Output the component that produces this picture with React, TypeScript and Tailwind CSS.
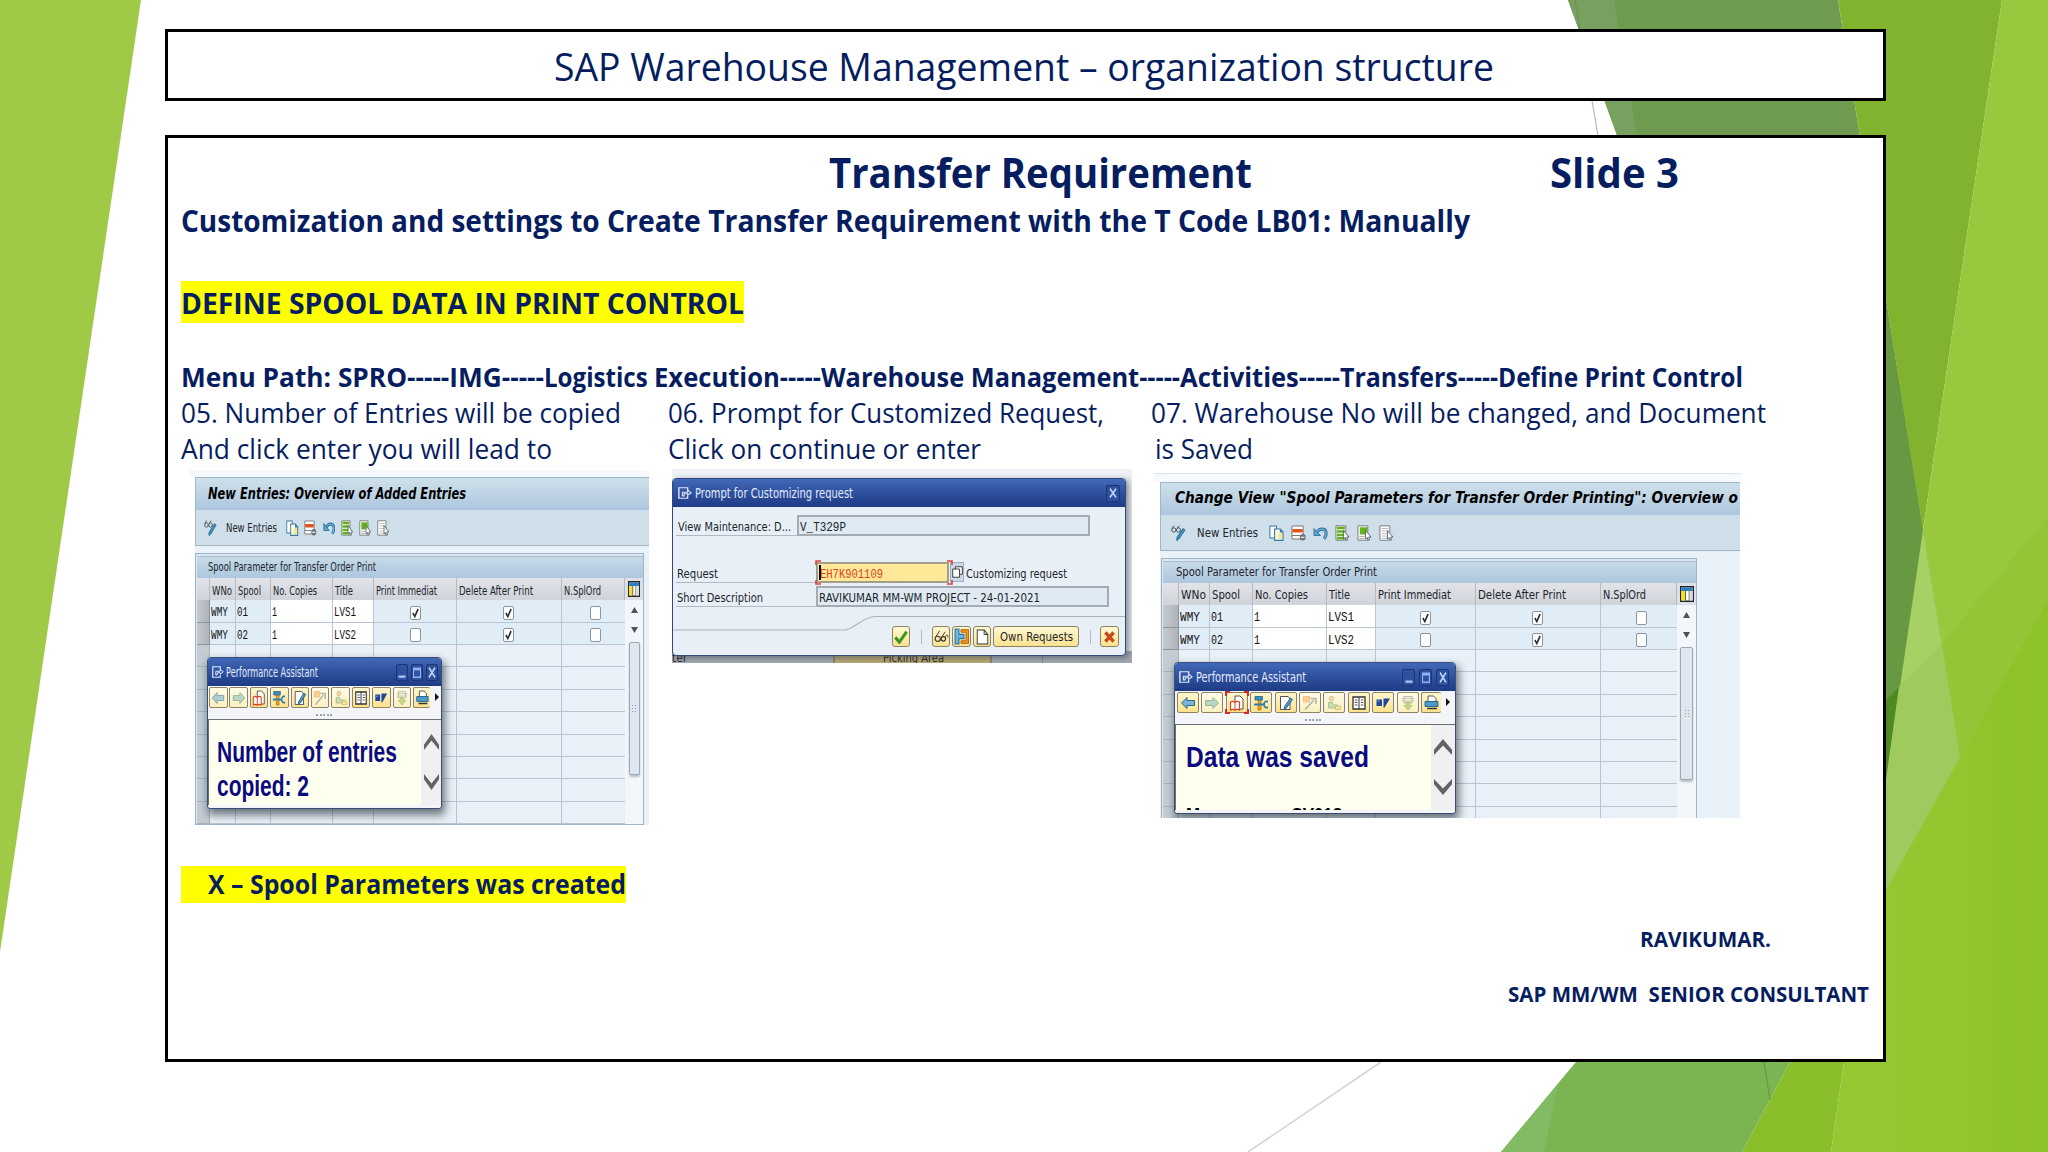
import React, { useLayoutEffect, useRef, useState } from 'react';

interface FitProps {
  className: string;
  children: React.ReactNode;
}

// Single line of text squeezed or stretched to the width of its box
const Fit: React.FC<FitProps> = ({ className, children }) => {
  const box = useRef<HTMLSpanElement>(null);
  const text = useRef<HTMLSpanElement>(null);
  const [scale, setScale] = useState(1);

  useLayoutEffect(() => {
    if (box.current && text.current && text.current.offsetWidth > 0) {
      const natural = text.current.getBoundingClientRect().width / scale;
      setScale(box.current.getBoundingClientRect().width / natural);
    }
  }, []);

  return (
    <span ref={box} className={`block shrink-0 whitespace-pre ${className}`}>
      <span ref={text} className="inline-block origin-left" style={{ transform: `scaleX(${scale})` }}>
        {children}
      </span>
    </span>
  );
};

const Backdrop = () => (
  <svg className="absolute inset-0" width="2048" height="1152" viewBox="0 0 2048 1152">
    <defs>
      <linearGradient id="bright" x1="0" y1="0" x2="1" y2="0">
        <stop offset="0" stopColor="#96c833" />
        <stop offset="0.6" stopColor="#93c52f" />
        <stop offset="0.8" stopColor="#8ec328" />
        <stop offset="1" stopColor="#8ec229" />
      </linearGradient>
    </defs>
    <path d="M0 0H141L0 952Z" fill="#a0ca46" />
    <path d="M1568 0H1838L1960 758L1886 900L1850 780Z" fill="#6f9b51" />
    <path d="M1568 0H1614L1637 135H1617Z" fill="#78a15f" />
    <path d="M1886 302L1923 530L1886 782Z" fill="#689842" />
    <path d="M1575 0L1598 136" stroke="#6b7a68" strokeOpacity="0.5" strokeWidth="1.2" />
    <path d="M1838 0H2002L1923 530Z" fill="#82b32e" />
    <path d="M2002 0H2048V603L1960 758L1923 530Z" fill="#99c73d" />
    <path d="M1923 530L1960 758L1886 892V782Z" fill="#a7d065" />
    <path d="M1886 700L1899 687L1886 780Z" fill="#4d8a22" />
    <path d="M1899 687L1942 643L1960 758L1886 892V780Z" fill="#9eca5e" />
    <path d="M1942 643L2048 517V603L1960 758Z" fill="#94c537" />
    <path d="M2048 600V1152H1831L1844 1062V965Z" fill="url(#bright)" />
    <path d="M1790 1062H1844L1831 1152H1742Z" fill="#8bbe2b" />
    <path d="M1576 1062H1790L1742 1152H1501Z" fill="#7bb551" />
    <path d="M1576 1062L1501 1152H1544L1558 1085Z" fill="#83bb64" />
    <path d="M1764 1062L1770 1100" stroke="#5f9a48" strokeWidth="1.2" />
    <path d="M1381 1062L1248 1152" stroke="#d4d4d4" strokeWidth="1.6" />
  </svg>
);

/* ---------- toolbar drawings ---------- */

interface IconProps {
  className: string;
}

const Svg: React.FC<IconProps & { children: React.ReactNode }> = ({ className, children }) => (
  <svg className={`shrink-0 ${className}`} viewBox="0 0 16 16" preserveAspectRatio="none" fill="none">
    {children}
  </svg>
);

const ExitIcon: React.FC<IconProps> = ({ className }) => (
  <Svg className={className}>
    <path d="M11 4V1H1V15H11V12" stroke="#dfe8fb" strokeWidth="1.6" />
    <path d="M5 12V7H11V4L15 8L11 11V9H7V12Z" stroke="#dfe8fb" strokeWidth="1.3" />
  </Svg>
);

const GlassesPencil: React.FC<IconProps> = ({ className }) => (
  <Svg className={className}>
    <circle cx="3" cy="5" r="2.2" stroke="#4a4f55" strokeWidth="1" />
    <circle cx="8" cy="5" r="2.2" stroke="#4a4f55" strokeWidth="1" />
    <path d="M1 4L3 0.5M6.5 3L9 0.5" stroke="#4a4f55" strokeWidth="0.9" />
    <path d="M15 5L8.5 14L6 15.5L6.4 12L12.8 3.5Z" fill="#3d8fc0" stroke="#27638c" strokeWidth="0.8" />
  </Svg>
);

const CopyIcon: React.FC<IconProps> = ({ className }) => (
  <Svg className={className}>
    <path d="M1 1H8V13H1Z" fill="#fff" stroke="#3579a8" strokeWidth="1.1" />
    <path d="M6 4H12L15 7V15.3H6Z" fill="#fffbe0" stroke="#3579a8" strokeWidth="1.2" />
    <path d="M10 8H14V14H10Z" fill="#f8e68a" />
    <path d="M11.5 4L15 7.5H11.5Z" fill="#3579a8" />
  </Svg>
);

const DeleteRow: React.FC<IconProps> = ({ className }) => (
  <Svg className={className}>
    <path d="M1 1H13V14H1Z" fill="#fff" stroke="#777" strokeWidth="1" />
    <path d="M1.5 4H12.5V7.5H1.5Z" fill="#e0531c" />
    <path d="M1 10.5H10" stroke="#777" />
    <circle cx="12.5" cy="12.3" r="3.2" fill="#6f7377" />
    <path d="M10.5 12.3H14.5" stroke="#fff" strokeWidth="1.1" />
  </Svg>
);

const UndoIcon: React.FC<IconProps> = ({ className }) => (
  <Svg className={className}>
    <path d="M4 8C6 3 14 2.5 14 8.5C14 10.8 13 12.5 11.5 13.5" stroke="#2c6f9e" strokeWidth="3.2" />
    <path d="M4 8C6 3 14 2.5 14 8.5C14 10.8 13 12.5 11.5 13.5" stroke="#6db0d8" strokeWidth="1.4" />
    <path d="M1 3.5V10.5H8Z" fill="#5ba3cf" stroke="#2c6f9e" strokeWidth="0.9" />
  </Svg>
);

const SelectIcon: React.FC<IconProps & { kind: 'all' | 'block' | 'none' }> = ({ className, kind }) => (
  <Svg className={className}>
    <path d="M1 0.8H11.5V15.2H1Z" fill="#fff" stroke="#757b80" strokeWidth="1" />
    {kind === 'all' && <path d="M2 3H10.5M2 6.5H10.5M2 10H10.5M2 13.3H10.5" stroke="#62b31a" strokeWidth="2.5" />}
    {kind === 'block' && <path d="M3 2.3H11V9.5H3Z" fill="#62b31a" />}
    {kind === 'block' && <path d="M2.5 11.5H8M2.5 13.5H8" stroke="#999" strokeWidth="0.8" />}
    {kind === 'none' && <path d="M3 3.5H10M3 6H10M3 8.5H10M3 11H10M3 13.3H10" stroke="#a7abb0" strokeWidth="0.8" />}
    <path d="M9 5.5L15 12H12.5L13.5 14.8L12 15.3L11 12.6L9 14Z" fill="#fff" stroke="#555b61" strokeWidth="0.9" />
  </Svg>
);

const ColumnsIcon: React.FC<IconProps> = ({ className }) => (
  <Svg className={className}>
    <path d="M0.8 0.8H15.2V15.2H0.8Z" fill="#fff" stroke="#222" strokeWidth="1.5" />
    <path d="M1.5 1.5H14.5V5H1.5Z" fill="#2f7fc1" />
    <path d="M1.5 5H6V14.5H1.5Z" fill="#f7e11c" />
    <path d="M6.3 5V14.5M10.5 5V14.5" stroke="#444" strokeWidth="0.9" />
    <path d="M11 5H14.5V14.5H11Z" fill="#d8dce2" />
  </Svg>
);

const Checkbox: React.FC<{ on: boolean }> = ({ on }) => (
  <span className="flex h-[14px] w-[11px] items-center justify-center rounded-[2px] border border-[#8d949b] bg-white">
    {on && (
      <svg className="h-[10px] w-[7px]" viewBox="0 0 8 10" preserveAspectRatio="none" fill="none">
        <path d="M1 5L3.2 8.5L7 1" stroke="#2b2f36" strokeWidth="1.8" />
      </svg>
    )}
  </span>
);

/* ---------- performance assistant popup ---------- */

const arrowLeft = <path d="M1.5 8L7 2.5V5.5H14.5V10.5H7V13.5Z" fill="#79b4d6" stroke="#2c6a91" strokeWidth="1" />;
const arrowRight = <path d="M14.5 8L9 2.5V5.5H1.5V10.5H9V13.5Z" fill="#8cc3b8" stroke="#4e8a88" strokeWidth="1" />;

const assistantIcons = [
  { dim: true, art: arrowLeft },
  { dim: true, art: arrowRight },
  {
    dim: false,
    art: (
      <>
        <path d="M6 1H11L14 4V14H6Z" fill="#fff" stroke="#444" strokeWidth="0.9" />
        <path d="M1.5 7C3.5 6 5 6.5 6 7.5C7 6.5 8.5 6 10.5 7V15C8.5 14 7 14.3 6 15.3C5 14.3 3.5 14 1.5 15Z" fill="#fff" stroke="#d8401f" strokeWidth="1.2" />
        <path d="M6 7.5V15" stroke="#d8401f" />
      </>
    ),
  },
  {
    dim: false,
    art: (
      <>
        <path d="M5 4H8V15H5Z" fill="#f0a022" stroke="#a8650c" strokeWidth="0.7" />
        <path d="M2 1.5H9.5V5H2Z" fill="#3d8fc0" stroke="#215f88" strokeWidth="0.8" />
        <path d="M1 9.5H11M15 6.5C11.5 6 11 8 11 9.5C11 11.5 12 13 15 12.5" stroke="#2d7fae" strokeWidth="1.8" />
      </>
    ),
  },
  {
    dim: false,
    art: (
      <>
        <path d="M2.5 1.5H10L12 4V14.5H2.5Z" fill="#fff" stroke="#444" strokeWidth="0.9" />
        <path d="M14.5 4.5L8.5 13L6 14.5L6.5 11.5L12.5 3Z" fill="#4c9ac6" stroke="#245f84" strokeWidth="0.9" />
      </>
    ),
  },
  {
    dim: true,
    art: (
      <>
        <path d="M1.5 1.5H7.5V7H1.5Z" fill="#f8b66a" stroke="#e2933a" strokeWidth="0.8" />
        <path d="M3 14.5L12 5M8.5 3.5H14V9" stroke="#7c8d8a" strokeWidth="1.6" />
      </>
    ),
  },
  {
    dim: true,
    art: (
      <>
        <circle cx="5.5" cy="3.5" r="2.2" fill="#f2c987" stroke="#a88b4a" strokeWidth="0.8" />
        <path d="M2.5 13V7.5L6 7L8 10H12V13Z" fill="#a9cf9b" stroke="#6c9763" strokeWidth="0.9" />
        <path d="M9.5 11H14.5V14.5H9.5Z" fill="#f5dc74" stroke="#b59a35" strokeWidth="0.8" />
      </>
    ),
  },
  {
    dim: false,
    art: (
      <>
        <path d="M2 2H14V14H2Z" fill="#fff" stroke="#333" strokeWidth="1.3" />
        <path d="M8 2V14" stroke="#333" />
        <path d="M3.8 5H6.5M3.8 7.5H6.5M3.8 10H6.5M9.8 5H12.4M9.8 7.5H12.4M9.8 10H12.4" stroke="#555" strokeWidth="1" />
      </>
    ),
  },
  {
    dim: false,
    art: (
      <>
        <path d="M8.5 3.5H15L9.5 12.5H8.5Z" fill="#1f459c" />
        <path d="M1.5 4.5H7V11H1.5Z" fill="#1f459c" />
        <path d="M2.5 5.5H4.5V7H2.5Z" fill="#6d92d9" />
      </>
    ),
  },
  {
    dim: true,
    art: (
      <>
        <path d="M4 1.5H12V8H4Z" fill="#f3f3e5" stroke="#8a8d7d" strokeWidth="0.9" />
        <path d="M2 3.5H14M2 6H14" stroke="#8a8d7d" strokeWidth="0.8" />
        <path d="M6.5 7.5H9.5V10.5H12L8 15L4 10.5H6.5Z" fill="#a5cf62" stroke="#6d9a35" strokeWidth="0.8" />
      </>
    ),
  },
  {
    dim: false,
    art: (
      <>
        <path d="M5 1H10.5L13 3.5V7H5Z" fill="#fff" stroke="#444" strokeWidth="0.9" />
        <path d="M2 6.5H15V11.5H2Z" fill="#4a9bc9" stroke="#215f88" strokeWidth="0.9" />
        <path d="M4 13.5H14" stroke="#333" strokeWidth="1.6" />
      </>
    ),
  },
];

interface AssistantProps {
  wide?: boolean;
  children: React.ReactNode;
}

const PerformanceAssistant: React.FC<AssistantProps> = ({ wide = false, children }) => (
  <div
    className={`absolute top-[180px] flex h-[152px] flex-col overflow-hidden rounded-t-[4px] rounded-b-[3px] border border-[#3a4f78] bg-[#f3f5f9] shadow-[2px_5px_9px_1px_rgba(40,50,60,0.65)] ${
      wide ? 'left-[14px] w-[282px]' : 'left-[12px] w-[235px]'
    }`}
  >
    <div className="flex h-[28px] shrink-0 items-center bg-gradient-to-b from-[#4168b8] to-[#1e3b85] pl-1">
      <ExitIcon className={wide ? 'h-3 w-[14px]' : 'h-3 w-[12px]'} />
      <Fit className={`text-[13.5px] leading-[24px] text-[#e3eafa] ${wide ? 'ml-[3px] w-[110px]' : 'ml-[2px] w-[92px]'}`}>
        Performance Assistant
      </Fit>
      <div className={`ml-auto flex ${wide ? 'gap-1 pr-[6px]' : 'gap-[3px] pr-[3px]'}`}>
        {['min', 'max', 'close'].map((kind) => (
          <span
            key={kind}
            className={`flex h-[17px] items-center justify-center rounded-[2px] border border-[#1b3474] bg-[#2e519f] ${wide ? 'w-[13px]' : 'w-[12px]'}`}
          >
            <Svg className="h-[11px] w-[8px]">
              {kind === 'min' && <path d="M1 14H15" stroke="#a9c6f5" strokeWidth="3" />}
              {kind === 'max' && <path d="M1 2H15V15H1ZM1 4H15" stroke="#8fb0ee" strokeWidth="2.4" />}
              {kind === 'close' && <path d="M2 1L14 15M14 1L2 15" stroke="#c3d5f8" strokeWidth="3" />}
            </Svg>
          </span>
        ))}
      </div>
    </div>
    <div className={`flex h-[24px] shrink-0 items-start pt-px ${wide ? 'gap-[2.4px] pl-[2px]' : 'gap-[1.9px] pl-px'}`}>
      {assistantIcons.map((icon, index) => {
        const last = index === assistantIcons.length - 1;
        const dim = icon.dim && !(wide && index === 0);
        return (
          <span
            key={index}
            className={`relative flex h-[21px] shrink-0 items-center justify-center rounded-[2px] border border-[#8f8460] bg-gradient-to-b ${
              dim ? 'from-[#fffbe6] to-[#fbf0bf]' : 'from-[#fff6cf] to-[#fbe28b]'
            } ${wide ? (last ? 'w-[20px] border-r-0' : 'w-[22px]') : last ? 'w-[17px] border-r-0' : 'w-[18.5px]'}`}
          >
            <Svg className={`h-[16px] ${wide ? 'w-[16px]' : 'w-[14px]'} ${dim ? 'opacity-60' : ''}`}>{icon.art}</Svg>
            {wide && index === 2 && (
              <svg className="absolute -top-[2px] -left-[2px] h-[23px] w-[24px]" viewBox="0 0 24 23" fill="none">
                <path d="M1 5V1H5M19 1H23V5M23 18V22H19M5 22H1V18" stroke="#d92a2a" strokeWidth="2" />
              </svg>
            )}
          </span>
        );
      })}
      <svg className="mt-[6px] ml-[3px] h-2 w-1 shrink-0" viewBox="0 0 4 8">
        <path d="M0 0L4 4L0 8Z" fill="#111" />
      </svg>
    </div>
    <div className={`flex h-[9px] shrink-0 items-center gap-[1.5px] ${wide ? 'pl-[130px]' : 'pl-[108px]'}`}>
      {[0, 1, 2, 3, 4].map((dot) => (
        <span key={dot} className="h-[2px] w-[2px] bg-[#9aa3ae]" />
      ))}
    </div>
    <div className="mb-[3px] flex min-h-0 flex-1 border-t-[1.5px] border-l border-[#6c6f78] bg-[#fffff0]">
      <div
        className={`min-w-0 flex-1 overflow-hidden pt-[15px] font-['Liberation_Sans',Arial,sans-serif] text-[29px] font-bold text-[#0b0b80] ${
          wide ? 'pl-[10px]' : 'pl-[8px]'
        }`}
      >
        {children}
      </div>
      <div className={`flex flex-col items-center justify-between bg-[#f0f0f0] pt-[14px] pb-[15px] ${wide ? 'w-[24px]' : 'w-[20px]'}`}>
        {['M0 10L8 0L16 10V15L8 6L0 15Z', 'M0 5L8 15L16 5V0L8 9L0 0Z'].map((d) => (
          <svg key={d} className={wide ? 'h-4 w-[18px]' : 'h-4 w-[15px]'} viewBox="0 0 16 15" preserveAspectRatio="none">
            <path d={d} fill="#636363" />
          </svg>
        ))}
      </div>
    </div>
  </div>
);

/* ---------- table views ---------- */

const columnNames = ['WNo', 'Spool', 'No. Copies', 'Title', 'Print Immediat', 'Delete After Print', 'N.SplOrd'];

const rows = [
  { wno: 'WMY', spool: '01', copies: '1', title: 'LVS1', checks: [true, true, false] },
  { wno: 'WMY', spool: '02', copies: '1', title: 'LVS2', checks: [false, true, false] },
];

const narrowCols = ['w-[25.5px]', 'w-[35.5px]', 'w-[62px]', 'w-[41px]', 'w-[83px]', 'w-[104.5px]', 'w-[63.5px]'];
const wideCols = ['w-[31px]', 'w-[42.5px]', 'w-[74px]', 'w-[49px]', 'w-[100px]', 'w-[125px]', 'w-[76.5px]'];
const narrowText = ['w-[20px]', 'w-[23px]', 'w-[44px]', 'w-[18px]', 'w-[61px]', 'w-[74px]', 'w-[37px]'];
const wideText = ['w-[25px]', 'w-[28px]', 'w-[53px]', 'w-[21px]', 'w-[73px]', 'w-[88px]', 'w-[43px]'];
const narrowMono = ['w-[17px]', 'w-[11px]', 'w-[5px]', 'w-[22px]'];
const wideMono = ['w-[20px]', 'w-[12px]', 'w-[6px]', 'w-[26px]'];

interface TableViewProps {
  wide?: boolean;
  heading: string;
  children: React.ReactNode;
}

const TableView: React.FC<TableViewProps> = ({ wide = false, heading, children }) => {
  const cols = wide ? wideCols : narrowCols;
  const texts = wide ? wideText : narrowText;
  const mono = wide ? wideMono : narrowMono;
  const selector = wide ? 'w-[16px]' : 'w-[13px]';
  const icon = wide ? 'h-4 w-[15px]' : 'h-4 w-[12.5px]';

  return (
    <div
      className={`relative overflow-hidden bg-[#e9f2f8] font-['DejaVu_Sans',Verdana,sans-serif] text-[#20252c] ${
        wide ? 'h-[336px] w-[580px]' : 'h-[348px] w-[454px]'
      }`}
    >
      <div className={`flex h-[33px] items-center border-t border-l border-[#9fb6cb] bg-gradient-to-b from-[#cfe0ea] to-[#adc6de] ${wide ? 'pb-[2px] pl-[14px]' : 'pl-[12px]'}`}>
        <Fit className={`text-[16.5px] leading-[30px] font-bold text-black italic ${wide ? 'w-[563px]' : 'w-[258px]'}`}>{heading}</Fit>
      </div>
      <div className={`flex h-[36px] items-center border-b border-l border-[#a5b4c2] bg-[#cfdfe9] ${wide ? 'pl-[10px]' : 'pt-px pl-[8px]'}`}>
        <GlassesPencil className={wide ? 'h-4 w-[15px]' : 'h-4 w-[13px]'} />
        <Fit className={`text-[13px] leading-[36px] ${wide ? 'ml-[11px] w-[61px]' : 'ml-[9px] w-[51px]'}`}>New Entries</Fit>
        <div className={`flex ${wide ? 'ml-[11px] gap-[7px]' : 'ml-[9px] gap-[5.8px]'}`}>
          <CopyIcon className={icon} />
          <DeleteRow className={icon} />
          <UndoIcon className={icon} />
          <SelectIcon className={icon} kind="all" />
          <SelectIcon className={icon} kind="block" />
          <SelectIcon className={icon} kind="none" />
        </div>
      </div>
      <div className={`mt-[7px] border border-[#9fb4c9] bg-[#dce8f1] pt-[2px] pl-px ${wide ? 'ml-px w-[536px]' : 'w-[449px]'}`}>
        <div className={`flex h-[22px] items-center border-t border-[#a9bccf] bg-gradient-to-b from-[#c7dae7] to-[#adc7de] ${wide ? 'pb-[2px] pl-[13px]' : 'pb-px pl-[11px]'}`}>
          <Fit className={`text-[13px] leading-[20px] ${wide ? 'w-[201px]' : 'w-[168px]'}`}>Spool Parameter for Transfer Order Print</Fit>
        </div>
        <div className="flex">
          <div>
            <div className={`flex h-[22px] bg-gradient-to-b from-[#e2e3e8] to-[#cfd3da] text-[12.5px] ${wide ? 'leading-[24px]' : 'leading-[25px]'}`}>
              <span className={`shrink-0 border-r border-[#b4b9c1] ${selector}`} />
              {columnNames.map((name, index) => (
                <span key={name} className={`shrink-0 border-r border-[#b4b9c1] pl-[2px] ${cols[index]}`}>
                  <Fit className={texts[index]}>{name}</Fit>
                </span>
              ))}
            </div>
            {rows.map((row) => (
              <div key={row.spool} className="flex h-[22.5px] font-['Liberation_Mono',monospace] text-[13px] leading-[26px] text-[#111]">
                <span className={`shrink-0 border-r border-b border-[#8d949c] bg-gradient-to-r from-[#c6cad0] to-[#aeb3bb] ${selector}`} />
                {[row.wno, row.spool, row.copies, row.title].map((value, index) => (
                  <span
                    key={index}
                    className={`shrink-0 border-r border-b border-[#b9c6d2] ${index > 1 ? 'bg-white pl-px' : 'bg-[#e1edf6] pl-px'} ${cols[index]}`}
                  >
                    <Fit className={mono[index]}>{value}</Fit>
                  </span>
                ))}
                {row.checks.map((on, index) => (
                  <span
                    key={index}
                    className={`flex shrink-0 items-center justify-center border-b border-[#b9c6d2] bg-[#e1edf6] pt-[4px] ${
                      index < 2 ? 'border-r' : 'pl-[5px]'
                    } ${cols[index + 4]}`}
                  >
                    <Checkbox on={on} />
                  </span>
                ))}
              </div>
            ))}
            {[0, 1, 2, 3, 4, 5, 6, 7].map((line) => (
              <div key={line} className="flex h-[22.4px] bg-[#e9f0f7]">
                <span className={`shrink-0 border-r border-b border-[#a9b3bb] bg-[#c3cdd3] ${selector}`} />
                {cols.map((col, index) => (
                  <span key={col} className={`shrink-0 border-b border-[#b9c6d2] ${index < 6 ? 'border-r' : ''} ${col}`} />
                ))}
              </div>
            ))}
          </div>
          <div className="flex flex-1 flex-col items-center bg-[#f3f7fb]">
            <div className="flex h-[22px] w-full items-center justify-center bg-[#dcdfe5]">
              <ColumnsIcon className={wide ? 'h-4 w-[14px]' : 'h-4 w-[12px]'} />
            </div>
            <svg className="mt-[7px] h-[27px] w-[7px]" viewBox="0 0 7 27">
              <path d="M0 6L3.5 0L7 6ZM0 20H7L3.5 26Z" fill="#4c5157" />
            </svg>
            <div className={`mt-[8px] flex h-[133px] items-center justify-center rounded-[2px] border border-[#9aa9b8] bg-[#dfe7ef] shadow-[0_2px_2px_rgba(60,70,80,0.3)] ${wide ? 'w-[13px]' : 'w-[11px]'}`}>
              <div className="grid grid-cols-2 gap-[2px]">
                {[0, 1, 2, 3, 4, 5].map((dot) => (
                  <span key={dot} className="h-px w-px bg-[#8c99a6]" />
                ))}
              </div>
            </div>
          </div>
        </div>
      </div>
      <PerformanceAssistant wide={wide}>{children}</PerformanceAssistant>
    </div>
  );
};

/* ---------- request prompt ---------- */

const KeyButton: React.FC<{ className: string; children: React.ReactNode }> = ({ className, children }) => (
  <span className={`flex h-[21px] shrink-0 items-center justify-center rounded-[3px] border border-[#8d8360] bg-gradient-to-b from-[#fff8d2] to-[#f9e28f] ${className}`}>
    {children}
  </span>
);

const RequestPrompt = () => (
  <div className="relative h-[194px] w-[460px] overflow-hidden bg-[#eef1f5] font-['DejaVu_Sans',Verdana,sans-serif] text-[13px] text-[#20252c]">
    <div className="absolute inset-x-0 bottom-0 flex h-[12px] overflow-hidden bg-[#a6abb3] leading-[14px]">
      <Fit className="w-[15px]">ter</Fit>
      <div className="ml-[146px] h-full w-[159px] border-x-2 border-[#8b8468] bg-[#b9a977] pl-[48px] text-[#2a2a20]">
        <Fit className="w-[61px]">Picking Area</Fit>
      </div>
      <div className="ml-[50px] h-full w-px bg-[#858b93]" />
    </div>
    <div className="relative mt-[9px] flex h-[178px] w-[454px] flex-col overflow-hidden rounded-[4px] border border-[#33497d] bg-[#e9eff6] shadow-[3px_2px_6px_rgba(60,70,80,0.6)]">
      <div className="flex h-[28px] shrink-0 items-center bg-gradient-to-b from-[#4168b8] to-[#1e3b85] pr-[5px] pl-[5px]">
        <ExitIcon className="h-3 w-[14px]" />
        <Fit className="ml-[3px] w-[158px] text-[13.5px] leading-[24px] text-[#e3eafa]">Prompt for Customizing request</Fit>
        <span className="ml-auto flex h-[17px] w-[14px] items-center justify-center rounded-[2px] border border-[#1b3474] bg-[#2e519f]">
          <Svg className="h-[10px] w-[8px]">
            <path d="M2 1L14 15M14 1L2 15" stroke="#c3d5f8" strokeWidth="3" />
          </Svg>
        </span>
      </div>
      <div className="mt-[8px] ml-[3px] flex h-[21px]">
        <div className="w-[121px] border-b border-[#b1bac3] pl-[2px] leading-[24px]">
          <Fit className="w-[113px]">View Maintenance: D...</Fit>
        </div>
        <div className="w-[293px] border-2 border-[#a3abb3] bg-[#dfeaf2] pl-px font-['Liberation_Mono',monospace] leading-[21px]">
          <Fit className="w-[46px]">V_T329P</Fit>
        </div>
      </div>
      <div className="mt-[26px] ml-[3px] flex h-[21px]">
        <div className="w-[140px] border-b border-[#b1bac3] pl-px leading-[24px]">
          <Fit className="w-[41px]">Request</Fit>
        </div>
        <div className="relative w-[133px] border-2 border-[#a3a08a] bg-[#ffe998] pl-[2px] font-['Liberation_Mono',monospace] leading-[21px] text-[#d9431b]">
          <Fit className="w-[63px]">EH7K901109</Fit>
          <span className="absolute top-px left-px h-[15px] w-[1.5px] bg-black" />
          <svg className="absolute -top-[4px] -left-[3px] h-[25px] w-[138px]" viewBox="0 0 138 25" fill="none">
            <path d="M1 5V1H6M132 1H137V5M137 20V24H132M6 24H1V20" stroke="#e04040" strokeWidth="1.6" />
          </svg>
        </div>
        <span className="ml-px flex h-[20px] w-[14px] items-center justify-center border border-[#9fb0c2] bg-[#c9d9e8]">
          <Svg className="h-[12px] w-[11px]">
            <path d="M5 1H15V11H5Z" fill="#fff" stroke="#333" strokeWidth="1.3" />
            <path d="M1 4H11V15H1Z" fill="#fff" stroke="#333" strokeWidth="1.3" />
          </Svg>
        </span>
        <Fit className="ml-[2px] w-[101px] leading-[24px]">Customizing request</Fit>
      </div>
      <div className="mt-[3px] ml-[3px] flex h-[21px]">
        <div className="w-[140px] border-b border-[#b1bac3] pl-px leading-[24px]">
          <Fit className="w-[86px]">Short Description</Fit>
        </div>
        <div className="w-[293px] border-2 border-[#a3abb3] bg-[#dfeaf2] pl-px leading-[20px]">
          <Fit className="w-[221px]">RAVIKUMAR MM-WM PROJECT - 24-01-2021</Fit>
        </div>
      </div>
      <div className="relative flex flex-1 items-start pt-[19px] pl-[219px]">
        <svg className="absolute top-[8px] left-0 h-[17px] w-[453px]" viewBox="0 0 453 17" fill="none">
          <path d="M0 15H172C180 15 190 1.5 202 1.5H453" stroke="#aab3bc" strokeWidth="1.1" />
        </svg>
        <KeyButton className="w-[18px]">
          <Svg className="h-[15px] w-[14px]">
            <path d="M1.5 9L6 14L14.5 3" stroke="#3e9420" strokeWidth="3.4" />
          </Svg>
        </KeyButton>
        <span className="mt-[4px] ml-[11px] h-[14px] w-px bg-[#b1bac3]" />
        <KeyButton className="ml-[10px] w-[18px]">
          <Svg className="h-[15px] w-[15px]">
            <path d="M1.5 9L6 2M8 9L12 3" stroke="#333" strokeWidth="1" />
            <circle cx="4" cy="10.5" r="2.8" stroke="#333" strokeWidth="1.2" />
            <circle cx="10" cy="10.5" r="2.4" stroke="#333" strokeWidth="1.2" />
            <path d="M12 8C14 5 15 7 15 9" stroke="#333" />
          </Svg>
        </KeyButton>
        <KeyButton className="ml-[2px] w-[19px]">
          <Svg className="h-[17px] w-[16px]">
            <path d="M1 1H5V6H10V10H5V15H1Z" fill="#6db3dc" stroke="#2873a3" strokeWidth="1" />
            <path d="M7 1.5H14.5V14.5H7V12H12V4H7Z" fill="#f59427" stroke="#b9610d" strokeWidth="0.9" />
          </Svg>
        </KeyButton>
        <KeyButton className="ml-[2px] w-[18px]">
          <Svg className="h-[16px] w-[13px]">
            <path d="M1.5 1H10L14.5 5.5V15H1.5Z" fill="#fff" stroke="#333" strokeWidth="1.1" />
            <path d="M10 1V5.5H14.5" stroke="#333" strokeWidth="1.1" />
          </Svg>
        </KeyButton>
        <KeyButton className="ml-[2px] w-[86px]">
          <Fit className="w-[73px] leading-[20px]">Own Requests</Fit>
        </KeyButton>
        <span className="mt-[4px] ml-[11px] h-[14px] w-px bg-[#b1bac3]" />
        <KeyButton className="ml-[9px] w-[19px]">
          <Svg className="h-[12px] w-[11px]">
            <path d="M2 2L14 14M14 2L2 14" stroke="#c8481a" strokeWidth="5" />
          </Svg>
        </KeyButton>
      </div>
    </div>
  </div>
);

const App: React.FC = () => {
  return (
    <div className="relative h-[1152px] w-[2048px] overflow-hidden bg-white font-['Open_Sans',Calibri,sans-serif] text-[#061d5f] [font-variant-ligatures:none]">
      <Backdrop />
      <main className="relative ml-[165px] w-[1721px] pt-[29px]">
        <header className="flex h-[72px] items-center justify-center border-[3px] border-black bg-white pt-[2px] pr-[3px]">
          <Fit className="w-[940px] text-[38.5px] leading-[64px]">SAP Warehouse Management – organization structure</Fit>
        </header>

        <section className="mt-[34px] h-[927px] border-[3px] border-black bg-white pl-[13px]">
          <div className="flex pt-[10px] pl-[648px] text-[42px] leading-[48px] font-bold">
            <Fit className="w-[423px]">Transfer Requirement</Fit>
            <Fit className="ml-[298px] w-[129px]">Slide 3</Fit>
          </div>
          <h2 className="mt-[7px] flex text-[30px] leading-[36px] font-bold">
            <Fit className="w-[426px]">{'Customization and settings to '}</Fit>
            <Fit className="w-[863px]">Create Transfer Requirement with the T Code LB01: Manually</Fit>
          </h2>
          <h3 className="mt-[42px] h-[42px] w-[563px] bg-[#ffff00] text-[29px] leading-[43px] font-bold">
            <Fit className="w-[563px]">DEFINE SPOOL DATA IN PRINT CONTROL</Fit>
          </h3>
          <p className="mt-[36px] flex text-[26.5px] leading-[36px] font-bold">
            <Fit className="w-[363px]">Menu Path: SPRO-----IMG-----</Fit>
            <Fit className="w-[110px]">{'Logistics '}</Fit>
            <Fit className="w-[167px]">Execution-----</Fit>
            <Fit className="w-[359px]">Warehouse Management-----</Fit>
            <Fit className="w-[160px]">Activities-----</Fit>
            <Fit className="w-[158px]">Transfers-----</Fit>
            <Fit className="w-[245px]">Define Print Control</Fit>
          </p>

          <div className="grid h-[471px] grid-cols-[487px_483px_1fr] text-[26.5px] leading-[36px]">
            <div>
              <Fit className="w-[440px]">05. Number of Entries will be copied</Fit>
              <Fit className="w-[371px]">And click enter you will lead to</Fit>
              <div className="mt-[3px] ml-[8px] h-[7px] w-[460px] bg-[#f5f9fd]" />
              <div className="pl-[14px]">
                <TableView heading="New Entries: Overview of Added Entries">
                  <Fit className="w-[180px] leading-[34px]">Number of entries</Fit>
                  <Fit className="w-[92px] leading-[34px]">copied: 2</Fit>
                </TableView>
              </div>
            </div>
            <div>
              <Fit className="w-[436px]">06. Prompt for Customized Request,</Fit>
              <Fit className="w-[313px]">Click on continue or enter</Fit>
              <div className="pt-[2px] pl-[4px]">
                <RequestPrompt />
              </div>
            </div>
            <div>
              <Fit className="w-[615px]">07. Warehouse No will be changed, and Document</Fit>
              <Fit className="ml-[4px] w-[98px]">is Saved</Fit>
              <div className="mt-[6px] ml-[3px] h-[9px] w-[587px] border-t border-[#dfe4ea] bg-[#f6fafe]" />
              <div className="pl-[9px]">
                <TableView wide heading={'Change View "Spool Parameters for Transfer Order Printing": Overview o'}>
                  <Fit className="w-[183px] leading-[34px]">Data was saved</Fit>
                  <Fit className="mt-[30px] w-[156px] text-[19px] leading-[22px] font-bold text-black">Message no. SV018</Fit>
                </TableView>
              </div>
            </div>
          </div>

          <p className="flex h-[37px] w-[445px] bg-[#ffff00] pl-[27px] text-[26.5px] leading-[37px] font-bold">
            <Fit className="w-[418px]">X – Spool Parameters was created</Fit>
          </p>

          <footer className="text-[21px] leading-[28px] font-bold">
            <Fit className="mt-[22px] ml-[1459px] w-[131px]">RAVIKUMAR.</Fit>
            <Fit className="mt-[27px] ml-[1327px] w-[361px]">SAP MM/WM  SENIOR CONSULTANT</Fit>
          </footer>
        </section>
      </main>
    </div>
  );
};

export default App;
